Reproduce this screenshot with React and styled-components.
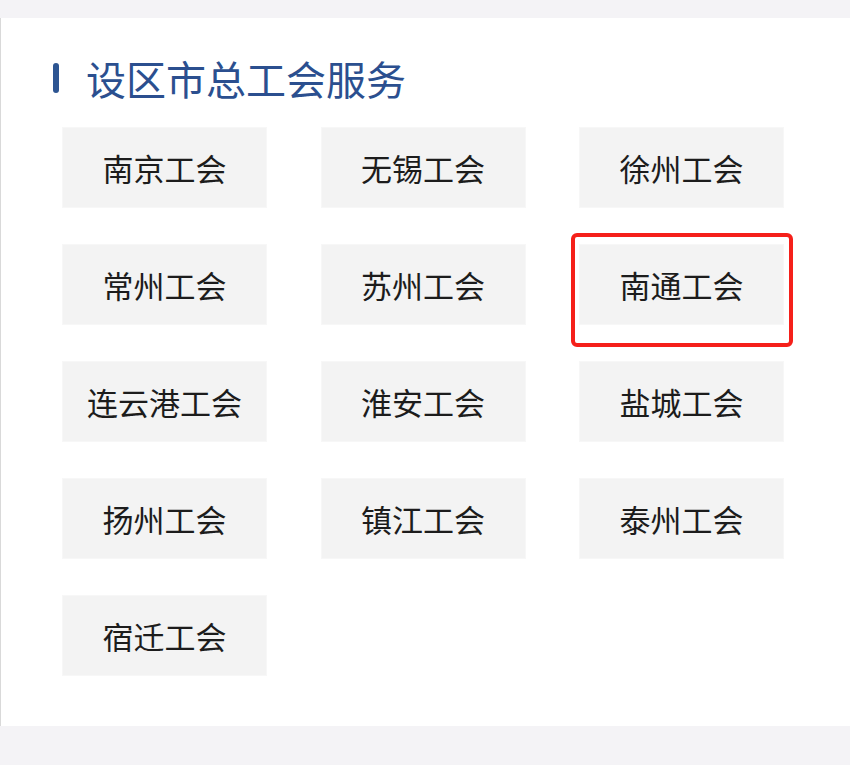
import React from "react";
import styled, { createGlobalStyle } from "styled-components";

const GlobalStyle = createGlobalStyle`
  html, body {
    margin: 0;
    padding: 0;
    background: #f4f3f6;
    font-family: "Noto Sans CJK SC", "Noto Sans", sans-serif;
  }
`;

const unions = [
  "南京工会", "无锡工会", "徐州工会",
  "常州工会", "苏州工会", "南通工会",
  "连云港工会", "淮安工会", "盐城工会",
  "扬州工会", "镇江工会", "泰州工会",
  "宿迁工会",
];

const App = () => {
  return (
    <Page>
      <GlobalStyle />
      <Card>
        <Header>
          <Bar />
          <Title>设区市总工会服务</Title>
        </Header>
        <Grid>
          {unions.map((name) => (
            <Tile key={name} $marked={name === "南通工会"}>
              {name}
            </Tile>
          ))}
        </Grid>
      </Card>
    </Page>
  );
};

const Page = styled.div`
  width: 850px;
  height: 765px;
  padding-top: 18px;
  box-sizing: border-box;
  background: #f4f3f6;
  overflow: hidden;
`;

const Card = styled.div`
  height: 708px;
  background: #ffffff;
  border-left: 1px solid #d9d9d9;
  box-sizing: border-box;
  padding-top: 40px;
`;

const Header = styled.div`
  display: flex;
  align-items: center;
  padding-left: 52px;
  height: 40px;
`;

const Bar = styled.div`
  width: 6px;
  height: 30px;
  border-radius: 3px;
  background: #2d5592;
`;

const Title = styled.h2`
  margin: 0 0 0 27px;
  font-size: 40px;
  line-height: 40px;
  font-weight: 400;
  color: #2b4f8f;
`;

const Grid = styled.div`
  display: grid;
  grid-template-columns: repeat(3, 205px);
  grid-auto-rows: 81px;
  column-gap: 53.5px;
  row-gap: 36px;
  margin-top: 29px;
  padding-left: 61px;
`;

const Tile = styled.div`
  position: relative;
  display: flex;
  align-items: center;
  justify-content: center;
  background: #f3f3f3;
  border: 1px solid #f7f7f7;
  font-size: 31px;
  color: #1c1c1c;

  ${(props) =>
    props.$marked &&
    `
    &::after {
      content: "";
      position: absolute;
      left: -9px;
      top: -12px;
      right: -10px;
      bottom: -23px;
      border: 4px solid #f5201a;
      border-radius: 6px;
    }
  `}
`;

export default App;
